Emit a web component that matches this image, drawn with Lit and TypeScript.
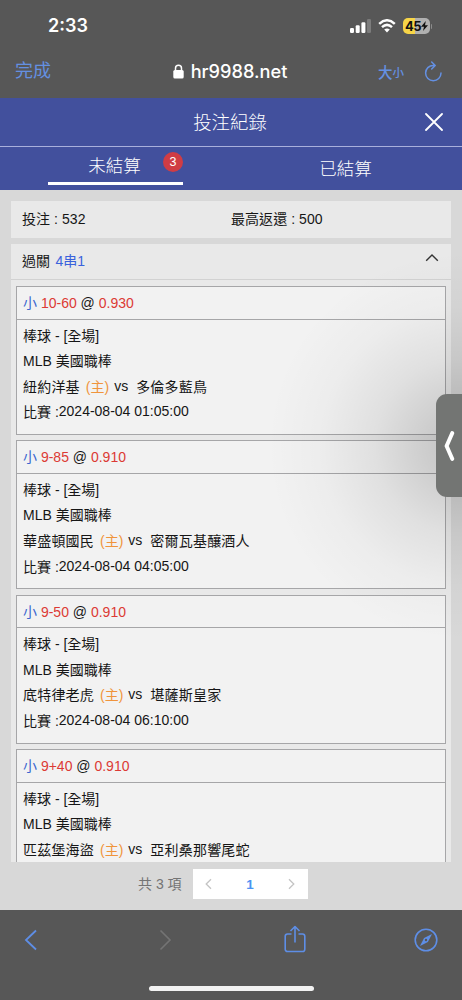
import { LitElement, html, css, nothing } from "lit";
import { customElement, property } from "lit/decorators.js";

interface Bet {
  line: string;
  odds: string;
  home: string;
  away: string;
  time?: string;
}

const BETS: Bet[] = [
  { line: "10-60", odds: "0.930", home: "紐約洋基", away: "多倫多藍鳥", time: "2024-08-04 01:05:00" },
  { line: "9-85", odds: "0.910", home: "華盛頓國民", away: "密爾瓦基釀酒人", time: "2024-08-04 04:05:00" },
  { line: "9-50", odds: "0.910", home: "底特律老虎", away: "堪薩斯皇家", time: "2024-08-04 06:10:00" },
  { line: "9+40", odds: "0.910", home: "匹茲堡海盜", away: "亞利桑那響尾蛇" },
];

@customElement("bet-card")
class BetCard extends LitElement {
  @property({ attribute: false }) bet!: Bet;

  static styles = css`
    :host {
      display: block;
      box-sizing: border-box;
      height: 149px;
      margin-bottom: 5.4px;
      border: 1px solid #a6a6a8;
      background: #f2f2f2;
      color: #161616;
      font-size: 14px;
    }
    .head {
      height: 31.5px;
      line-height: 32.4px;
      padding-left: 6px;
      border-bottom: 1px solid #a6a6a8;
      white-space: pre;
    }
    .pick { color: #3a66cf; }
    .red { color: #dc3a34; }
    .body { padding: 4px 0 0 6px; }
    .row {
      display: flex;
      height: 25.6px;
      line-height: 25.6px;
      white-space: pre;
    }
    .name { letter-spacing: 0.2px; }
    .home { color: #f0943c; margin: 0 5px 0 6px; }
    .vs { margin-right: 8px; line-height: 23px; }
    .date { line-height: 22.5px; }
  `;

  render() {
    const b = this.bet;
    return html`
      <div class="head"><span class="pick">小</span> <span class="red">${b.line}</span> @ <span class="red">${b.odds}</span></div>
      <div class="body">
        <div class="row">棒球 - [全場]</div>
        <div class="row">MLB 美國職棒</div>
        <div class="row"><span class="name">${b.home}</span><span class="home">(主)</span><span class="vs">vs</span><span class="name">${b.away}</span></div>
        ${b.time ? html`<div class="row"><span>比賽 :</span><span class="date">${b.time}</span></div>` : nothing}
      </div>
    `;
  }
}

@customElement("app-root")
class AppRoot extends LitElement {
  static styles = css`
    :host {
      display: flex;
      flex-direction: column;
      position: relative;
      box-sizing: border-box;
      width: 462px;
      height: 1000px;
      overflow: hidden;
      background: #d8d8d8;
      font-family: "Liberation Sans", "Noto Sans CJK TC", sans-serif;
      color: #161616;
    }
    svg { display: block; flex: none; fill: none; }
    .top { height: 98px; flex: none; background: #575757; color: #fff; }
    .status {
      display: flex;
      align-items: center;
      height: 52px;
      padding: 0 30px 0 48px;
      font: 600 18px/52px Inter, sans-serif;
    }
    .time { flex: 1; }
    .signal { margin-right: 7px; }
    .wifi { margin-right: 7px; }
    .battery {
      width: 27px;
      height: 16px;
      border-radius: 5px;
      background: linear-gradient(90deg, #f7d548 45%, #b0b0b0 45%);
      color: #111;
      font: 700 13px/16px Inter, sans-serif;
      display: flex;
      align-items: center;
      padding-left: 2.5px;
      box-sizing: border-box;
      letter-spacing: -0.6px;
    }
    .nub { width: 1.5px; height: 5px; margin-left: 1px; background: #8c8c8c; border-radius: 0 2px 2px 0; }
    .url {
      display: grid;
      grid-template-columns: 1fr auto 1fr;
      align-items: center;
      height: 38px;
      padding: 0 20px 0 15px;
      color: #6490e2;
    }
    .done { font-size: 18px; line-height: 36px; }
    .site {
      display: flex;
      align-items: center;
      gap: 7px;
      margin-left: 3px;
      color: #fff;
      font: 500 18.2px/38px Inter, sans-serif;
    }
    .tools { display: flex; justify-content: flex-end; align-items: center; font-weight: 500; }
    .big { font-size: 14.5px; }
    .small { font-size: 11.5px; padding-top: 2px; margin-right: 20px; }
    .title {
      flex: none;
      display: grid;
      grid-template-columns: 1fr auto 1fr;
      align-items: center;
      height: 48px;
      border-bottom: 1px solid #a9b0dc;
      background: #42509d;
      color: #fff;
      font-size: 18.4px;
      font-weight: 300;
    }
    .close { grid-column: 3; justify-self: end; margin-right: 19px; }
    .name { grid-column: 2; margin: -2px 2px 0 0; }
    .tabs {
      flex: none;
      display: grid;
      grid-template-columns: 1fr 1fr;
      height: 43px;
      background: #42509d;
      color: #fff;
      font-size: 17.5px;
      font-weight: 300;
    }
    .tab { display: flex; justify-content: center; line-height: 44px; padding-right: 2px; }
    .tab.active { line-height: 38px; padding-right: 0; }
    .in { position: relative; width: 135px; height: 38px; box-sizing: border-box; padding-right: 2px; text-align: center; border-bottom: 3px solid #fff; }
    .badge {
      position: absolute;
      right: 0;
      top: 5px;
      width: 20px;
      height: 20px;
      border-radius: 50%;
      background: #d03c44;
      font-size: 12.5px;
      line-height: 20px;
      text-align: center;
    }
    .main { flex: none; height: 672px; box-sizing: border-box; padding: 11px 11px 0; overflow: hidden; font-size: 14px; position: relative; }
    .summary { display: grid; grid-template-columns: 209px 1fr; height: 37px; line-height: 37px; padding-left: 11px; background: #e9e9e9; white-space: pre; margin-bottom: 6px; }
    .summary span { letter-spacing: 0.06px; }
    .panel { background: #e9e9e9; }
    .phead {
      display: flex;
      justify-content: space-between;
      height: 35px;
      line-height: 35px;
      padding: 0 12px 0 11px;
      border-bottom: 1px solid #d2d2d2;
    }
    .blue { color: #3a62dc; margin-left: 5.5px; }
    .list { padding: 6px 5px 0; }
    .chev { margin-top: 8px; }
    .shade {
      position: absolute;
      right: 0;
      top: 56px;
      width: 200px;
      height: 400px;
      background: radial-gradient(ellipse 195px 195px at 100% 50%, rgba(0, 0, 0, 0.2), rgba(0, 0, 0, 0.15) 20%, rgba(0, 0, 0, 0.075) 45%, rgba(0, 0, 0, 0.025) 72%, transparent);
    }
    .handle {
      position: absolute;
      right: 0;
      top: 394px;
      width: 26px;
      height: 103px;
      border-radius: 11px 0 0 11px;
      background: #737573;
      display: flex;
      align-items: center;
      padding-left: 8px;
      box-sizing: border-box;
    }
    .pager { flex: 1; display: flex; padding: 7px 0 0 138px; box-sizing: border-box; }
    .total { width: 55px; font-size: 14px; line-height: 30px; color: #747474; white-space: pre; }
    .pages {
      display: flex;
      align-items: center;
      justify-content: space-between;
      width: 115px;
      height: 30px;
      box-sizing: border-box;
      padding: 0 13px 0 12px;
      background: #fff;
      color: #4b93f2;
      font-size: 13.5px;
      font-weight: 700;
    }
    .bottom { flex: none; height: 90px; background: #575757; display: flex; flex-direction: column; align-items: center; }
    .nav { display: flex; align-items: center; width: 100%; height: 59px; padding: 0 23px; box-sizing: border-box; }
    .forward { margin-left: 122px; }
    .share { margin: -2px 108px 0 111px; }
    .bar { margin-top: 17px; width: 165px; height: 5px; border-radius: 3px; background: #f2f2f2; }
  `;

  render() {
    return html`
      <div class="top">
        <div class="status">
          <span class="time">2:33</span>
          <svg class="signal" width="21" height="14" viewBox="0 0 21 14">
            <rect x="0" y="9" width="4" height="5" rx="1.2" fill="#fff" />
            <rect x="5.7" y="6.3" width="4" height="7.7" rx="1.2" fill="#fff" />
            <rect x="11.4" y="3.2" width="4" height="10.8" rx="1.2" fill="#fff" />
            <rect x="17" y="0" width="4" height="14" rx="1.2" fill="#7c7c7c" />
          </svg>
          <svg class="wifi" width="18" height="14" viewBox="0 0 18 14">
            <path d="M1.2 4.9Q9 -2.3 16.8 4.9M4 8.2Q9 3.6 14 8.2" stroke="#fff" stroke-width="2.5" />
            <path d="M6.2 10.6Q9 8.3 11.8 10.6L9 13.6Z" fill="#fff" />
          </svg>
          <span class="battery">45<svg width="7" height="10" viewBox="0 0 7 10"><path d="M4.8 0L0 5.7H3L2 10L7 4.2H4Z" fill="#111" /></svg></span>
          <span class="nub"></span>
        </div>
        <div class="url">
          <span class="done">完成</span>
          <span class="site">
            <svg width="11" height="15" viewBox="0 0 11 15">
              <rect x="0.3" y="6" width="10.4" height="8.5" rx="1.6" fill="#fff" />
              <path d="M2.5 6.5V4.2a3 3 0 0 1 6 0V6.5" stroke="#fff" stroke-width="1.5" />
            </svg>
            <span>hr9988.net</span>
          </span>
          <span class="tools">
            <span class="big">大</span><span class="small">小</span>
            <svg width="18" height="21" viewBox="0 0 18 21" stroke="#6490e2" stroke-width="1.5" stroke-linecap="round" stroke-linejoin="round">
              <path d="M10.8 4.4H9.3a7.7 7.7 0 1 0 7.7 7.7M7.7 1L11.2 4.5L7.7 8" />
            </svg>
          </span>
        </div>
      </div>

      <div class="title">
        <span class="name">投注紀錄</span>
        <svg class="close" width="18" height="18" viewBox="0 0 18 18" stroke="#fff" stroke-width="1.8" stroke-linecap="round"><path d="M1 1L17 17M17 1L1 17" /></svg>
      </div>
      <div class="tabs">
        <div class="tab active"><div class="in">未結算<span class="badge">3</span></div></div>
        <div class="tab">已結算</div>
      </div>

      <div class="main">
        <div class="summary"><span>投注 : 532</span><span>最高返還 : 500</span></div>
        <div class="panel">
          <div class="phead">
            <span>過關<span class="blue">4串1</span></span>
            <svg class="chev" width="14" height="11" viewBox="0 0 14 11" stroke="#333" stroke-width="1.4"><path d="M1.2 8.8L7 3L12.8 8.8" /></svg>
          </div>
          <div class="list">${BETS.map((b) => html`<bet-card .bet=${b}></bet-card>`)}</div>
        </div>
        <div class="shade"></div>
      </div>

      <div class="pager">
        <span class="total">共 3 項</span>
        <div class="pages">
          <svg width="7" height="12" viewBox="0 0 7 12" stroke="#c4c4c4" stroke-width="1.3"><path d="M6 1.2L1.2 6L6 10.8" /></svg>
          <span>1</span>
          <svg width="7" height="12" viewBox="0 0 7 12" stroke="#c4c4c4" stroke-width="1.3"><path d="M1 1.2L5.8 6L1 10.8" /></svg>
        </div>
      </div>

      <div class="bottom">
        <div class="nav">
          <svg width="14" height="22" viewBox="0 0 14 22" stroke="#5e8ee6" stroke-width="1.8"><path d="M13 1.5L3 11L13 20.5" /></svg>
          <svg class="forward" width="14" height="22" viewBox="0 0 14 22" stroke="#747474" stroke-width="1.6"><path d="M1.5 1.5L11 11L1.5 20.5" /></svg>
          <svg class="share" width="22" height="28" viewBox="0 0 22 28" stroke="#5e8ee6" stroke-width="1.6" stroke-linejoin="round">
            <path d="M7.5 9H3.5a2.3 2.3 0 0 0-2.3 2.3V24.2a2.3 2.3 0 0 0 2.3 2.3H18.5a2.3 2.3 0 0 0 2.3-2.3V11.3A2.3 2.3 0 0 0 18.5 9H14.5M11 17.5V2M6.5 6L11 1.5L15.5 6" />
          </svg>
          <svg width="24" height="24" viewBox="0 0 24 24">
            <circle cx="12" cy="12" r="10.8" stroke="#5e8ee6" stroke-width="1.6" />
            <path d="M18 6L13.9 13.9L6 18L10.1 10.1Z" fill="#5e8ee6" />
            <circle cx="12" cy="12" r="1.2" fill="#575757" />
          </svg>
        </div>
        <div class="bar"></div>
      </div>

      <div class="handle">
        <svg width="11" height="30" viewBox="0 0 11 30" stroke="#fff" stroke-width="4" stroke-linecap="round" stroke-linejoin="round"><path d="M8.2 2.2L2.6 15L8.2 27.8" /></svg>
      </div>
    `;
  }
}
